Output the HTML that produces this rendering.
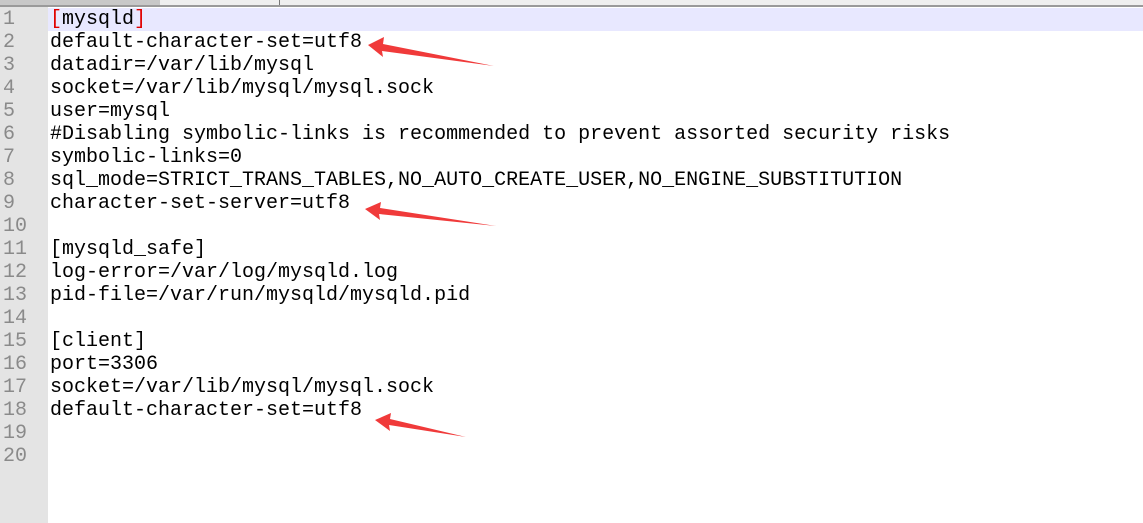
<!DOCTYPE html>
<html><head><style>
body{margin:0;width:1143px;height:523px;overflow:hidden;background:#fff;position:relative;font-family:"Liberation Mono","Courier New",monospace;}
.top{position:absolute;left:0;top:0;width:1143px;height:5px;background:#efefef;}
.top .a{position:absolute;left:0;top:0;width:160px;height:5px;background:#c8c8c8;}
.top .s{position:absolute;left:279px;top:0;width:1px;height:5px;background:#777;}
.line{position:absolute;left:0;top:5px;width:1143px;height:2px;background:#9a9a9a;}
.gut{position:absolute;left:0;top:7px;width:48px;height:516px;background:#e4e4e4;}
.hl{position:absolute;left:48px;top:8px;width:1095px;height:23px;background:#e8e8ff;}
.row{position:absolute;height:23px;line-height:23px;font-size:20px;white-space:pre;}
.n{left:3px;color:#8a8a8a;}
.t{left:50px;color:#000;}
.r{color:#e00000;}
</style></head><body>
<div class="top"><div class="a"></div><div class="s"></div></div>
<div class="line"></div>
<div class="gut"></div>
<div class="hl"></div>
<div class="row n" style="top:8px">1</div><div class="row t" style="top:8px"><span class="r">[</span>mysqld<span class="r">]</span></div>
<div class="row n" style="top:31px">2</div><div class="row t" style="top:31px">default-character-set=utf8</div>
<div class="row n" style="top:54px">3</div><div class="row t" style="top:54px">datadir=/var/lib/mysql</div>
<div class="row n" style="top:77px">4</div><div class="row t" style="top:77px">socket=/var/lib/mysql/mysql.sock</div>
<div class="row n" style="top:100px">5</div><div class="row t" style="top:100px">user=mysql</div>
<div class="row n" style="top:123px">6</div><div class="row t" style="top:123px">#Disabling symbolic-links is recommended to prevent assorted security risks</div>
<div class="row n" style="top:146px">7</div><div class="row t" style="top:146px">symbolic-links=0</div>
<div class="row n" style="top:169px">8</div><div class="row t" style="top:169px">sql_mode=STRICT_TRANS_TABLES,NO_AUTO_CREATE_USER,NO_ENGINE_SUBSTITUTION</div>
<div class="row n" style="top:192px">9</div><div class="row t" style="top:192px">character-set-server=utf8</div>
<div class="row n" style="top:215px">10</div>
<div class="row n" style="top:238px">11</div><div class="row t" style="top:238px">[mysqld_safe]</div>
<div class="row n" style="top:261px">12</div><div class="row t" style="top:261px">log-error=/var/log/mysqld.log</div>
<div class="row n" style="top:284px">13</div><div class="row t" style="top:284px">pid-file=/var/run/mysqld/mysqld.pid</div>
<div class="row n" style="top:307px">14</div>
<div class="row n" style="top:330px">15</div><div class="row t" style="top:330px">[client]</div>
<div class="row n" style="top:353px">16</div><div class="row t" style="top:353px">port=3306</div>
<div class="row n" style="top:376px">17</div><div class="row t" style="top:376px">socket=/var/lib/mysql/mysql.sock</div>
<div class="row n" style="top:399px">18</div><div class="row t" style="top:399px">default-character-set=utf8</div>
<div class="row n" style="top:422px">19</div>
<div class="row n" style="top:445px">20</div>
<svg width="1143" height="523" style="position:absolute;left:0;top:0">
<g fill="#f03a3a">
<polygon points="368,45 384,37 383,44 494,66 382,51 383,57"/>
<polygon points="365,209 381,202 380,208 496,226 379,214 380,220"/>
<polygon points="375,420 391,413 390,419 466,437 389,425 390,431"/>
</g>
</svg>
</body></html>
